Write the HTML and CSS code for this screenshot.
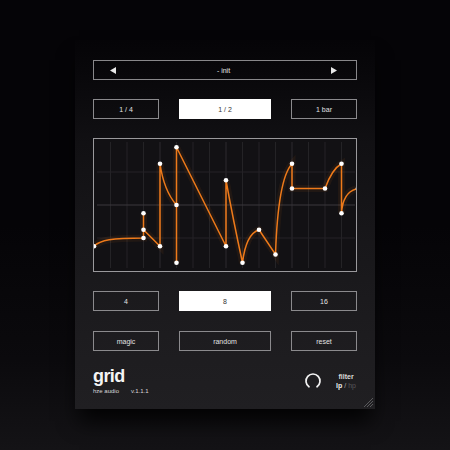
FILE: index.html
```html
<!DOCTYPE html>
<html>
<head>
<meta charset="utf-8">
<link rel="stylesheet" href="styles.css">
</head>
<body>
<div class="panel">
  <div class="preset">
    <svg class="arrow" width="6" height="7" viewBox="0 0 6 7"><polygon points="6,0 6,7 0,3.5" fill="#e8e8e8"/></svg>
    <span class="preset-name">- init</span>
    <svg class="arrow" width="6" height="7" viewBox="0 0 6 7"><polygon points="0,0 0,7 6,3.5" fill="#e8e8e8"/></svg>
  </div>

  <div class="row">
    <div class="btn">1 / 4</div>
    <div class="btn on">1 / 2</div>
    <div class="btn">1 bar</div>
  </div>

  <div class="graph">
    <svg width="264" height="132" viewBox="0 0 264 132">
      <g stroke="#242326" stroke-width="1">
        <line x1="16.5" y1="3" x2="16.5" y2="129"/>
        <line x1="33" y1="3" x2="33" y2="129"/>
        <line x1="49.5" y1="3" x2="49.5" y2="129"/>
        <line x1="66" y1="3" x2="66" y2="129" stroke="#2c2b2e"/>
        <line x1="82.5" y1="3" x2="82.5" y2="129"/>
        <line x1="99" y1="3" x2="99" y2="129"/>
        <line x1="115.5" y1="3" x2="115.5" y2="129"/>
        <line x1="132" y1="3" x2="132" y2="129" stroke="#2c2b2e"/>
        <line x1="148.5" y1="3" x2="148.5" y2="129"/>
        <line x1="165" y1="3" x2="165" y2="129"/>
        <line x1="181.5" y1="3" x2="181.5" y2="129"/>
        <line x1="198" y1="3" x2="198" y2="129" stroke="#2c2b2e"/>
        <line x1="214.5" y1="3" x2="214.5" y2="129"/>
        <line x1="231" y1="3" x2="231" y2="129"/>
        <line x1="247.5" y1="3" x2="247.5" y2="129"/>
        <line x1="3" y1="33" x2="261" y2="33"/>
        <line x1="3" y1="66" x2="261" y2="66" stroke="#3a393c"/>
        <line x1="3" y1="99" x2="261" y2="99"/>
      </g>
      <path class="glow" d="M0 107.25 C6 101 18 99 49.5 99 L49.5 74.25 M49.5 90.75 L66 107.25 L66 24.75 Q70 52 82.5 66 M82.5 123.75 L82.5 8.25 L132 107.25 L132 41.25 Q139 80 148.5 123.75 Q152 95 165 90.75 L181.5 115.5 Q184 40 198 24.75 L198 49.5 L231 49.5 Q238 30 247.5 24.75 L247.5 74.25 Q249 52 264 49.5"/>
      <path class="curve" d="M0 107.25 C6 101 18 99 49.5 99 L49.5 74.25 M49.5 90.75 L66 107.25 L66 24.75 Q70 52 82.5 66 M82.5 123.75 L82.5 8.25 L132 107.25 L132 41.25 Q139 80 148.5 123.75 Q152 95 165 90.75 L181.5 115.5 Q184 40 198 24.75 L198 49.5 L231 49.5 Q238 30 247.5 24.75 L247.5 74.25 Q249 52 264 49.5"/>
      <g fill="#ffffff">
        <circle cx="0" cy="107.25" r="2.3"/>
        <circle cx="49.5" cy="99" r="2.3"/>
        <circle cx="49.5" cy="90.75" r="2.3"/>
        <circle cx="49.5" cy="74.25" r="2.3"/>
        <circle cx="66" cy="107.25" r="2.3"/>
        <circle cx="66" cy="24.75" r="2.3"/>
        <circle cx="82.5" cy="66" r="2.3"/>
        <circle cx="82.5" cy="8.25" r="2.3"/>
        <circle cx="82.5" cy="123.75" r="2.3"/>
        <circle cx="132" cy="107.25" r="2.3"/>
        <circle cx="132" cy="41.25" r="2.3"/>
        <circle cx="148.5" cy="123.75" r="2.3"/>
        <circle cx="165" cy="90.75" r="2.3"/>
        <circle cx="181.5" cy="115.5" r="2.3"/>
        <circle cx="198" cy="24.75" r="2.3"/>
        <circle cx="198" cy="49.5" r="2.3"/>
        <circle cx="231" cy="49.5" r="2.3"/>
        <circle cx="247.5" cy="24.75" r="2.3"/>
        <circle cx="247.5" cy="74.25" r="2.3"/>
        <circle cx="264" cy="49.5" r="2.3"/>
      </g>
    </svg>
  </div>

  <div class="row">
    <div class="btn">4</div>
    <div class="btn on">8</div>
    <div class="btn">16</div>
  </div>

  <div class="row row-last">
    <div class="btn">magic</div>
    <div class="btn">random</div>
    <div class="btn">reset</div>
  </div>

  <div class="footer">
    <div class="brand">
      <div class="title">grid</div>
      <div class="meta"><span>hze audio</span><span>v.1.1.1</span></div>
    </div>
    <div class="controls">
      <svg class="knob" width="18" height="18" viewBox="0 0 18 18">
        <path d="M4.98 14.73 A7 7 0 1 1 13.02 14.73" fill="none" stroke="#f2f2f2" stroke-width="1.7" stroke-linecap="round"/>
      </svg>
      <div class="filter">
        <div class="filter-label">filter</div>
        <div class="filter-mode"><span class="lp">lp</span> <span class="slash">/</span> <span class="hp">hp</span></div>
      </div>
    </div>
  </div>

  <svg class="grip" width="10" height="10" viewBox="0 0 10 10">
    <g stroke="#6a696c" stroke-width="0.8">
      <line x1="10" y1="1" x2="1" y2="10"/>
      <line x1="10" y1="4" x2="4" y2="10"/>
      <line x1="10" y1="7" x2="7" y2="10"/>
    </g>
  </svg>
</div>
</body>
</html>
```

FILE: styles.css
```css
html, body {
  margin: 0;
  padding: 0;
}
body {
  width: 450px;
  height: 450px;
  overflow: hidden;
  background: linear-gradient(180deg, #050407 0%, #050407 50%, #0b0a0d 80%, #141316 100%);
  font-family: "Liberation Sans", Arial, sans-serif;
  color: #e2e2e2;
}
.panel {
  position: relative;
  box-sizing: border-box;
  width: 300px;
  height: 369px;
  margin: 40px 0 0 75px;
  padding: 20px 18px 0 18px;
  display: flex;
  flex-direction: column;
  gap: 19px;
  background: linear-gradient(180deg, #050407 0%, #08070a 8%, #111013 28%, #18171a 55%, #1d1c1f 80%, #201f22 100%);
  box-shadow: 0 16px 20px -4px rgba(0, 0, 0, 0.85);
}
.preset {
  box-sizing: border-box;
  height: 20px;
  border: 1px solid #88878a;
  display: flex;
  align-items: center;
  justify-content: space-between;
  padding: 0 19px 0 16px;
}
.preset-name {
  font-size: 7px;
  color: #e6e6e6;
}
.arrow {
  display: block;
}
.row {
  display: grid;
  grid-template-columns: 66px 1fr 66px;
  gap: 20px;
}
.row-last {
  margin-top: 1px;
}
.btn {
  box-sizing: border-box;
  height: 20px;
  border: 1px solid #8b8a8d;
  display: flex;
  align-items: center;
  justify-content: center;
  font-size: 7px;
  color: #e2e2e2;
}
.btn.on {
  background: #ffffff;
  border-color: #ffffff;
  color: #333333;
}
.graph {
  box-sizing: border-box;
  height: 134px;
  border: 1px solid #9a999c;
  background: #121114;
  overflow: hidden;
}
.graph svg {
  display: block;
}
.curve {
  fill: none;
  stroke: #ee7a1a;
  stroke-width: 1.5;
}
.glow {
  fill: none;
  stroke: #ee7a1a;
  stroke-width: 7;
  opacity: 0.07;
}
.footer {
  display: flex;
  justify-content: space-between;
  align-items: flex-start;
  margin-top: -3px;
}
.title {
  font-size: 18px;
  line-height: 18px;
  font-weight: bold;
  color: #f4f4f4;
  letter-spacing: -0.6px;
}
.meta {
  display: flex;
  gap: 12px;
  font-size: 6px;
  line-height: 8px;
  color: #d8d8d8;
  margin-top: 2px;
}
.controls {
  display: flex;
  align-items: center;
  gap: 14px;
  margin-top: 5px;
  margin-right: 1px;
}
.knob {
  display: block;
}
.filter {
  text-align: center;
  font-size: 7px;
  line-height: 9px;
  font-weight: bold;
}
.filter-label {
  color: #dcdcdc;
}
.filter-mode .lp {
  color: #ececec;
}
.filter-mode .slash {
  color: #a8a8a8;
  font-weight: normal;
}
.filter-mode .hp {
  color: #58575a;
  font-weight: normal;
}
.grip {
  position: absolute;
  right: 2px;
  bottom: 2px;
}
```
